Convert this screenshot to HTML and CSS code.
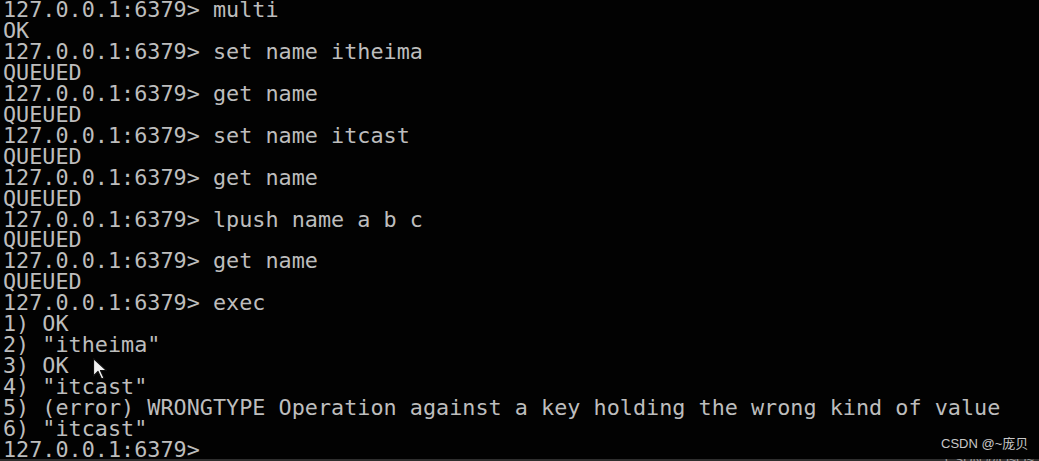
FILE: index.html
```html
<!DOCTYPE html>
<html>
<head>
<meta charset="utf-8">
<link rel="stylesheet" href="styles.css">
</head>
<body>
<div class="term">
<pre class="out">127.0.0.1:6379&gt; multi
OK
127.0.0.1:6379&gt; set name itheima
QUEUED
127.0.0.1:6379&gt; get name
QUEUED
127.0.0.1:6379&gt; set name itcast
QUEUED
127.0.0.1:6379&gt; get name
QUEUED
127.0.0.1:6379&gt; lpush name a b c
QUEUED
127.0.0.1:6379&gt; get name
QUEUED
127.0.0.1:6379&gt; exec
1) OK
2) "itheima"
3) OK
4) "itcast"
5) (error) WRONGTYPE Operation against a key holding the wrong kind of value
6) "itcast"
127.0.0.1:6379&gt; </pre>
<svg class="cursor" width="16" height="24" viewBox="0 0 16 24"><path d="M1.5 1.5 L1.5 19 L6 14.5 L9.5 22 L12 21 L8.5 13.5 L14.5 13.5 Z" fill="#f2f2f2" stroke="#111" stroke-width="1.2" stroke-linejoin="round"/></svg>
<div class="mark">CSDN @~庞贝</div>
<div class="strip"><span class="strip-text">CSDN @Q~Q~庞</span></div>
</div>
</body>
</html>
```
FILE: styles.css
```css
html, body {
  margin: 0;
  padding: 0;
  background: #000;
  overflow: hidden;
}
.term {
  position: relative;
  width: 1039px;
  height: 461px;
  background: #020202;
}
.out {
  margin: 0;
  padding: 0 0 0 3px;
  font-family: "DejaVu Sans Mono", monospace;
  font-size: 21.8px;
  line-height: 20.95px;
  color: #bdbdbd;
  white-space: pre;
}
.cursor {
  position: absolute;
  left: 92px;
  top: 357px;
}
.mark {
  position: absolute;
  left: 941px;
  top: 436px;
  font-family: "Liberation Sans", "Noto Sans CJK SC", sans-serif;
  font-size: 13px;
  color: #c8c8c8;
  line-height: 15px;
}
.strip {
  position: absolute;
  left: 0;
  right: 0;
  bottom: 0;
  height: 2px;
  background: #2e2e2e;
  overflow: hidden;
}
.strip-text {
  position: absolute;
  left: 945px;
  top: -3px;
  font-family: "Liberation Sans", "Noto Sans CJK SC", sans-serif;
  font-size: 13px;
  line-height: 8px;
  color: #999;
}
```
